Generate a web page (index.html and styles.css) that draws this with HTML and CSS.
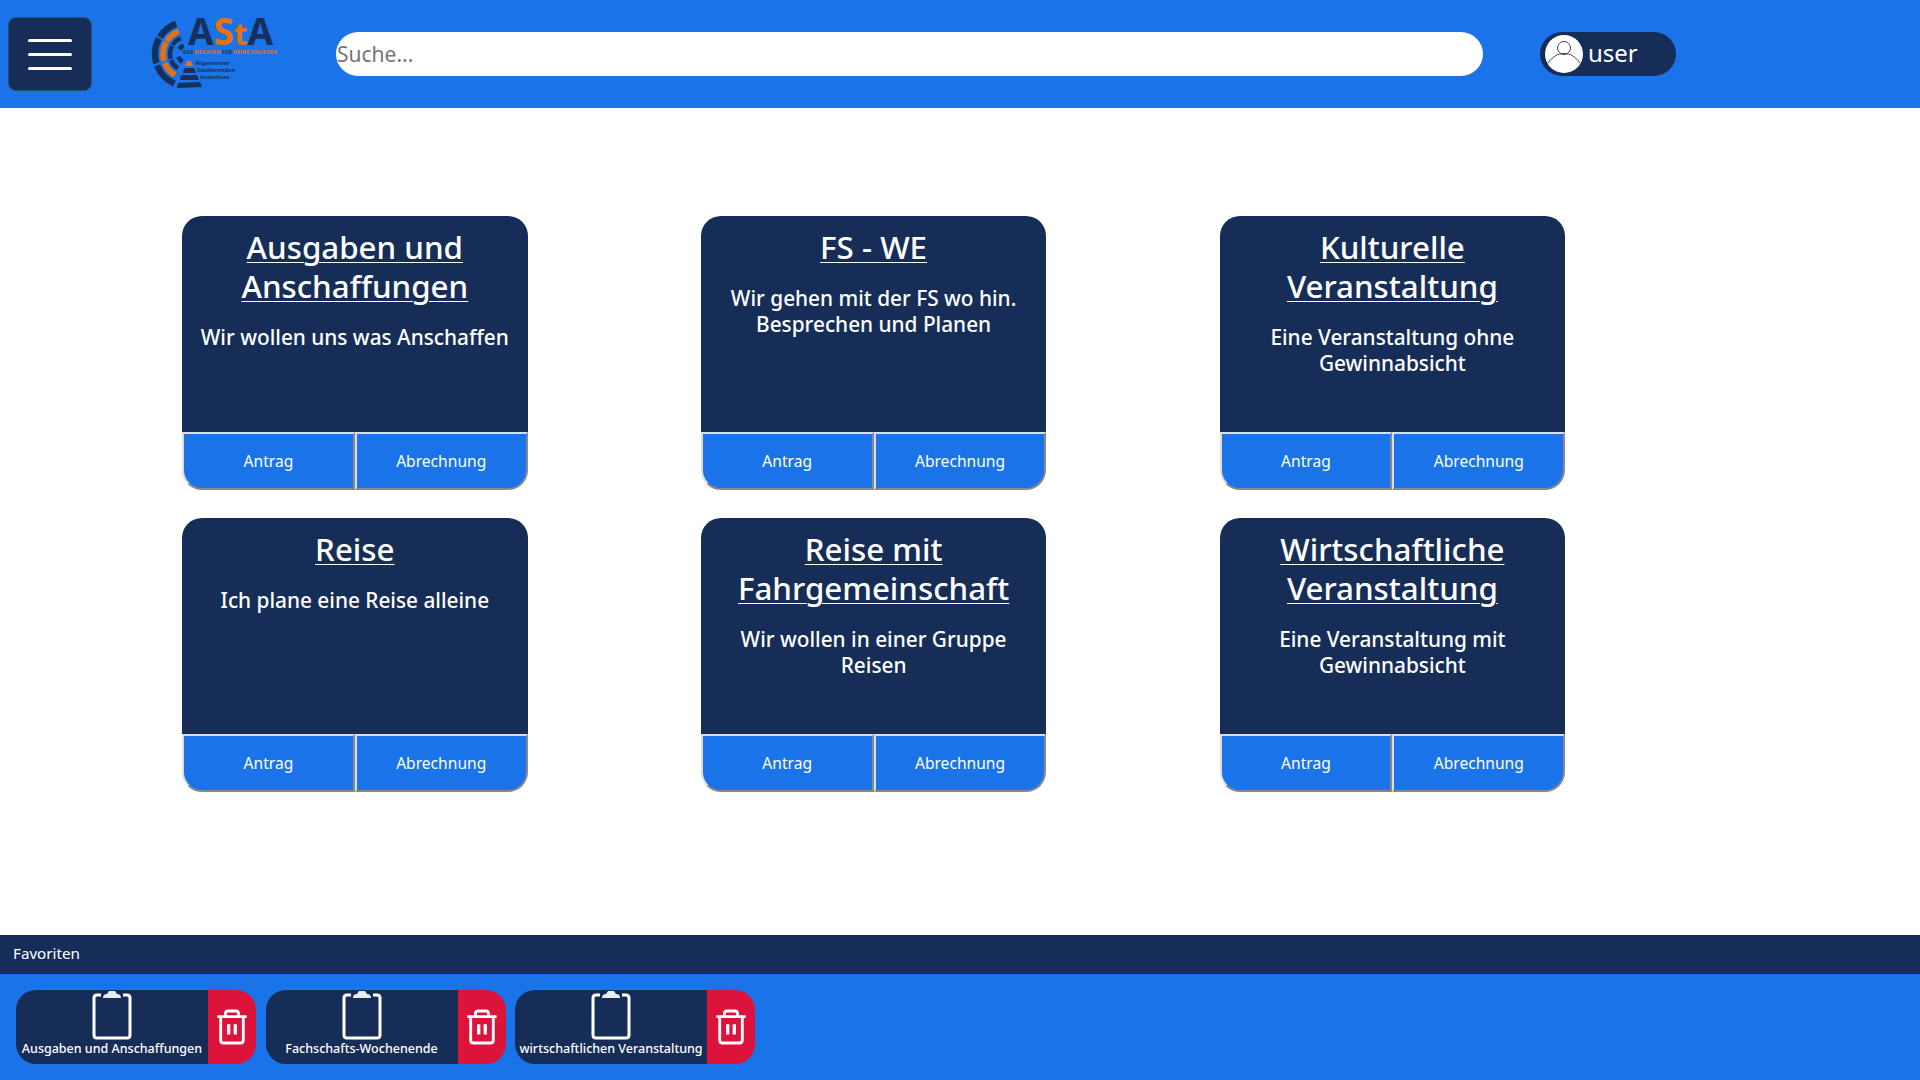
FILE: index.html
```html
<!DOCTYPE html>
<html lang="de">
<head>
<meta charset="utf-8">
<title>AStA</title>
<link rel="stylesheet" href="styles.css">
</head>
<body>
<header class="topbar">
  <button class="menu-btn" aria-label="Menü"><span></span><span></span><span></span></button>
  <svg class="logo" viewBox="150 0 130 108" width="130" height="108">
    <g fill="none" stroke="#16305c">
      <circle cx="187" cy="54" r="32" stroke-width="6.5" pathLength="360" stroke-dasharray="38 322" stroke-dashoffset="-212"/>
      <circle cx="187" cy="54" r="32" stroke-width="6.5" pathLength="360" stroke-dasharray="46 314" stroke-dashoffset="-163"/>
      <circle cx="187" cy="54" r="32" stroke-width="6.5" pathLength="360" stroke-dasharray="46 314" stroke-dashoffset="-113"/>
      <circle cx="187" cy="54" r="17" stroke-width="4.5" pathLength="360" stroke-dasharray="36 324" stroke-dashoffset="-212"/>
      <circle cx="187" cy="54" r="17" stroke-width="4.5" pathLength="360" stroke-dasharray="46 314" stroke-dashoffset="-163"/>
      <circle cx="187" cy="54" r="17" stroke-width="4.5" pathLength="360" stroke-dasharray="36 324" stroke-dashoffset="-123"/>
      <circle cx="187" cy="54" r="9" stroke-width="4.5" pathLength="360" stroke-dasharray="36 324" stroke-dashoffset="-212"/>
      <circle cx="187" cy="54" r="9" stroke-width="4.5" pathLength="360" stroke-dasharray="42 318" stroke-dashoffset="-120"/>
    </g>
    <g fill="none" stroke="#e8710f" stroke-width="5.5">
      <circle cx="187" cy="54" r="24" pathLength="360" stroke-dasharray="38 322" stroke-dashoffset="-212"/>
      <circle cx="187" cy="54" r="24" pathLength="360" stroke-dasharray="46 314" stroke-dashoffset="-163"/>
      <circle cx="187" cy="54" r="24" pathLength="360" stroke-dasharray="38 322" stroke-dashoffset="-120"/>
    </g>
    <polygon fill="#e8710f" points="187,61 191,61 193,66 185,66"/>
    <polygon fill="#16305c" points="184,68 194,68 196,73 183,73"/>
    <polygon fill="#16305c" points="181,75 197,75 199,80 180,80"/>
    <polygon fill="#16305c" points="178,83 200,82 202,87 177,88"/>
    <text class="logo-big" x="188" y="45">A<tspan fill="#e8710f">S</tspan><tspan fill="#e8710f" class="logo-t">t</tspan>A</text>
    <text class="logo-tag" x="183" y="54" textLength="94">DAS <tspan fill="#e8710f">MEGAFON</tspan> FÜR <tspan fill="#e8710f">DEINE ANLIEGEN</tspan></text>
    <text class="logo-sub" x="195" y="65">Allgemeiner</text>
    <text class="logo-sub" x="197" y="72">Studierenden</text>
    <text class="logo-sub" x="200" y="79">Ausschuss</text>
  </svg>
  <input class="search" type="text" placeholder="Suche...">
  <div class="user-pill">
    <svg class="avatar" viewBox="0 0 38 38" width="38" height="38">
      <circle cx="19" cy="19" r="19" fill="#fff"/>
      <circle cx="19" cy="13" r="6.500" fill="none" stroke="#444" stroke-width="1"/>
      <path d="M3 28 C8 21 13 18.500 19 18.500 C25 18.500 30 21 35 28" fill="none" stroke="#444" stroke-width="1"/>
    </svg>
    <span class="user-name">user</span>
  </div>
</header>

<main class="content">
  <section class="grid">
    <article class="card">
      <div class="card-body"><h2 class="card-title">Ausgaben und Anschaffungen</h2><p class="card-text">Wir wollen uns was Anschaffen</p></div>
      <div class="card-actions"><button class="action">Antrag</button><button class="action">Abrechnung</button></div>
    </article>
    <article class="card">
      <div class="card-body"><h2 class="card-title">FS - WE</h2><p class="card-text">Wir gehen mit der FS wo hin. Besprechen und Planen</p></div>
      <div class="card-actions"><button class="action">Antrag</button><button class="action">Abrechnung</button></div>
    </article>
    <article class="card">
      <div class="card-body"><h2 class="card-title">Kulturelle Veranstaltung</h2><p class="card-text">Eine Veranstaltung ohne Gewinnabsicht</p></div>
      <div class="card-actions"><button class="action">Antrag</button><button class="action">Abrechnung</button></div>
    </article>
    <article class="card">
      <div class="card-body"><h2 class="card-title">Reise</h2><p class="card-text">Ich plane eine Reise alleine</p></div>
      <div class="card-actions"><button class="action">Antrag</button><button class="action">Abrechnung</button></div>
    </article>
    <article class="card">
      <div class="card-body"><h2 class="card-title">Reise mit Fahrgemeinschaft</h2><p class="card-text">Wir wollen in einer Gruppe Reisen</p></div>
      <div class="card-actions"><button class="action">Antrag</button><button class="action">Abrechnung</button></div>
    </article>
    <article class="card">
      <div class="card-body"><h2 class="card-title">Wirtschaftliche Veranstaltung</h2><p class="card-text">Eine Veranstaltung mit Gewinnabsicht</p></div>
      <div class="card-actions"><button class="action">Antrag</button><button class="action">Abrechnung</button></div>
    </article>
  </section>
</main>

<footer class="favorites">
  <div class="fav-head">Favoriten</div>
  <div class="fav-list">
    <div class="fav">
      <div class="fav-main">
        <svg class="clip" viewBox="0 0 40 50" width="40" height="50"><path d="M9 5 H5 Q2 5 2 8 V45 Q2 48 5 48 H35 Q38 48 38 45 V8 Q38 5 35 5 H31" fill="none" stroke="#fff" stroke-width="3"/><path d="M11 8 Q11 4 15 4 L17 1 H23 L25 4 Q29 4 29 8 Z" fill="#e8ecf4"/></svg>
        <span class="fav-label">Ausgaben und Anschaffungen</span>
      </div>
      <button class="fav-del" aria-label="Löschen"><svg viewBox="0 0 34 38" width="32" height="36"><path d="M1.500 8 H32.500 M5 8 V33 Q5 36 8 36 H26 Q29 36 29 33 V8 M10 8 V5 Q10 2 13 2 H21 Q24 2 24 5 V8" fill="none" stroke="#fff" stroke-width="3"/><path d="M13.500 16 V27 M20.500 16 V27" stroke="#fff" stroke-width="3.500" fill="none"/></svg></button>
    </div>
    <div class="fav">
      <div class="fav-main">
        <svg class="clip" viewBox="0 0 40 50" width="40" height="50"><path d="M9 5 H5 Q2 5 2 8 V45 Q2 48 5 48 H35 Q38 48 38 45 V8 Q38 5 35 5 H31" fill="none" stroke="#fff" stroke-width="3"/><path d="M11 8 Q11 4 15 4 L17 1 H23 L25 4 Q29 4 29 8 Z" fill="#e8ecf4"/></svg>
        <span class="fav-label">Fachschafts-Wochenende</span>
      </div>
      <button class="fav-del" aria-label="Löschen"><svg viewBox="0 0 34 38" width="32" height="36"><path d="M1.500 8 H32.500 M5 8 V33 Q5 36 8 36 H26 Q29 36 29 33 V8 M10 8 V5 Q10 2 13 2 H21 Q24 2 24 5 V8" fill="none" stroke="#fff" stroke-width="3"/><path d="M13.500 16 V27 M20.500 16 V27" stroke="#fff" stroke-width="3.500" fill="none"/></svg></button>
    </div>
    <div class="fav">
      <div class="fav-main">
        <svg class="clip" viewBox="0 0 40 50" width="40" height="50"><path d="M9 5 H5 Q2 5 2 8 V45 Q2 48 5 48 H35 Q38 48 38 45 V8 Q38 5 35 5 H31" fill="none" stroke="#fff" stroke-width="3"/><path d="M11 8 Q11 4 15 4 L17 1 H23 L25 4 Q29 4 29 8 Z" fill="#e8ecf4"/></svg>
        <span class="fav-label">wirtschaftlichen Veranstaltung</span>
      </div>
      <button class="fav-del" aria-label="Löschen"><svg viewBox="0 0 34 38" width="32" height="36"><path d="M1.500 8 H32.500 M5 8 V33 Q5 36 8 36 H26 Q29 36 29 33 V8 M10 8 V5 Q10 2 13 2 H21 Q24 2 24 5 V8" fill="none" stroke="#fff" stroke-width="3"/><path d="M13.500 16 V27 M20.500 16 V27" stroke="#fff" stroke-width="3.500" fill="none"/></svg></button>
    </div>
  </div>
</footer>
</body>
</html>
```
FILE: styles.css
```css
* { box-sizing: border-box; }
html, body { height: 100%; }
body {
  margin: 0;
  height: 100vh;
  display: flex;
  flex-direction: column;
  overflow: hidden;
  background: #fff;
  font-family: "Noto Sans", "Open Sans", sans-serif;
  color: #fff;
}
.topbar {
  height: 108px;
  flex: none;
  background: #1a73e8;
  display: flex;
  align-items: center;
  padding-left: 8px;
}
.menu-btn {
  width: 84px;
  height: 74px;
  flex: none;
  background: #162e57;
  border: 1px solid #2f4a7a;
  border-radius: 8px;
  padding: 0;
  display: flex;
  flex-direction: column;
  align-items: center;
  justify-content: center;
  gap: 11px;
}
.menu-btn span {
  width: 44px;
  height: 3px;
  background: #fff;
  border-radius: 2px;
}
.logo { margin-left: 58px; flex: none; }
.logo-big { font: 700 37px "Noto Sans", sans-serif; fill: #16305c; }
.logo-t { font-size: 31px; }
.logo-tag { font: 700 4.800px "Noto Sans", sans-serif; fill: #16305c; }
.logo-sub { font: 700 5.700px "Noto Sans", sans-serif; fill: #16305c; }
.search {
  width: 1147px;
  height: 44px;
  margin-left: 56px;
  flex: none;
  border: 0;
  border-radius: 22px;
  padding: 0 1px;
  background: #fff;
  font: 400 21px "Noto Sans", sans-serif;
  outline: none;
}
.search::placeholder { color: #757575; }
.user-pill {
  width: 136px;
  height: 44px;
  margin-left: 57px;
  flex: none;
  background: #162e57;
  border-radius: 22px;
  display: flex;
  align-items: center;
  padding-left: 5px;
  gap: 5px;
}
.avatar { flex: none; }
.user-name { font-size: 24px; padding-bottom: 4px; }
.content { flex: 1; padding: 108px 0 0 182px; }
.grid {
  display: grid;
  grid-template-columns: repeat(3, 345.600px);
  grid-auto-rows: 274px;
  column-gap: 173.200px;
  row-gap: 28px;
}
.card { display: flex; flex-direction: column; }
.card-body {
  height: 216px;
  flex: none;
  background: #162e57;
  border-radius: 20px 20px 0 0;
  padding: 12px 12px 0;
  text-align: center;
}
.card-title {
  margin: 0;
  font-size: 31.300px;
  font-weight: 500;
  line-height: 39px;
  text-decoration: underline;
  text-decoration-thickness: 1px;
  text-underline-offset: 3px;
}
.card-text { margin: 18px 0 0; font-size: 20.800px; line-height: 26px; font-weight: 500; }
.card-actions { flex: 1; display: flex; }
.action {
  flex: 1;
  background: #1a73e8;
  color: #fff;
  border: 2px outset #ddd;
  font: 400 15.600px "Noto Sans", sans-serif;
  padding: 0 0 1px;
}
.action:first-child { border-bottom-left-radius: 20px; }
.action:last-child { border-bottom-right-radius: 20px; }
.favorites { flex: none; height: 145px; background: #1a73e8; display: flex; flex-direction: column; }
.fav-head {
  height: 39px;
  flex: none;
  background: #162e57;
  border-bottom: 1px solid #10264a;
  padding-left: 13px;
  font-size: 15.200px;
  line-height: 37px;
}
.fav-list { display: flex; gap: 9.500px; padding: 16px 0 0 16px; }
.fav { width: 240px; height: 74px; display: flex; border-radius: 20px; overflow: hidden; }
.fav-main {
  width: 192px;
  background: #162e57;
  display: flex;
  flex-direction: column;
  align-items: center;
}
.clip { flex: none; }
.fav-label { font-size: 12.500px; font-weight: 500; line-height: 18px; white-space: nowrap; }
.fav-del {
  flex: 1;
  background: #dc143c;
  border: 0;
  padding: 0;
  display: flex;
  align-items: center;
  justify-content: center;
}
```
